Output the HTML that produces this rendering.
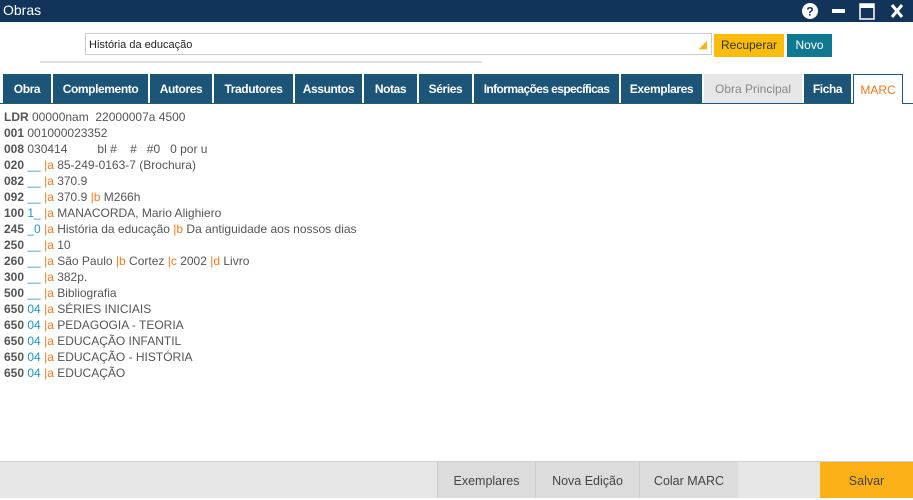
<!DOCTYPE html><html><head><style>
body{margin:0;width:913px;height:497px;position:relative;background:#fff;font-family:"Liberation Sans",sans-serif;overflow:hidden}
.hd{position:absolute;left:0;top:0;width:913px;height:22px;background:#12345a;color:#fff;font-size:14px}
.hd span{position:absolute;left:3px;top:2px}
.inp{position:absolute;left:85px;top:33px;width:627px;height:22px;border:1px solid #ccc;font-size:11px;line-height:22px;padding-left:3px;box-sizing:border-box;color:#222}
.btn{position:absolute;font-size:12px;text-align:center;line-height:23px;height:23px}
.tabs{position:absolute;top:74px;left:0;height:29px;width:913px;border-bottom:1px solid #1d5a7e}
.t{position:absolute;top:0;height:29px;background:#1c5578;color:#fff;font-size:12px;font-weight:bold;letter-spacing:-0.4px;white-space:nowrap;text-align:center;line-height:31px}
.c{position:absolute;left:4px;top:109px;font-size:12px;line-height:16px;color:#555}
.c b{color:#555}.o{color:#f07a20}.bl{color:#2596be}
.ft{position:absolute;left:0;top:461px;width:913px;height:36px;background:#e6e6e6;border-top:1px solid #d0d0d0}
.fb{position:absolute;top:0;height:36px;background:#dcdcdc;color:#444;font-size:12.5px;text-align:center;line-height:38px;border-left:1px solid #ccc}
</style></head><body>
<div class="hd"><span>Obras</span>
<svg style="position:absolute;left:800px;top:2px" width="110" height="18"><circle cx="10" cy="9" r="8" fill="#fff"/><text x="10" y="13.5" font-size="12" font-weight="bold" text-anchor="middle" fill="#12345a" font-family="Liberation Sans">?</text><rect x="32" y="7" width="13" height="4" fill="#fff"/><rect x="60" y="2" width="14" height="15" fill="none" stroke="#fff" stroke-width="1.5"/><rect x="60" y="2" width="14" height="4" fill="#fff"/><path d="M92 3l10 12M102 3l-10 12" stroke="#fff" stroke-width="3"/></svg></div>
<div class="inp">História da educação<span style="position:absolute;right:4px;top:0;color:#f5b21b;font-size:11px">&#9698;</span></div>
<div class="btn" style="left:714px;top:34px;width:70px;background:#fbbc0b;color:#333">Recuperar</div>
<div class="btn" style="left:787px;top:34px;width:45px;background:#10798f;color:#fff">Novo</div>
<div style="position:absolute;left:40px;top:61px;width:442px;height:2px;background:#e0e0e0"></div>
<div class="tabs">
<div class="t" style="left:3px;width:48px">Obra</div>
<div class="t" style="left:53px;width:95px">Complemento</div>
<div class="t" style="left:150px;width:62px">Autores</div>
<div class="t" style="left:214px;width:79px">Tradutores</div>
<div class="t" style="left:295px;width:67px">Assuntos</div>
<div class="t" style="left:364px;width:53px">Notas</div>
<div class="t" style="left:419px;width:53px">Séries</div>
<div class="t" style="left:474px;width:145px;letter-spacing:-0.6px">Informações específicas</div>
<div class="t" style="left:621px;width:81px">Exemplares</div>
<div class="t" style="left:704px;width:98px;background:#e6e6e6;color:#888;font-weight:normal;letter-spacing:0">Obra Principal</div>
<div class="t" style="left:804px;width:47px">Ficha</div>
<div class="t" style="left:853px;width:50px;background:#fff;color:#f07a20;font-weight:normal;letter-spacing:0;border:1px solid #1d5a7e;border-bottom:none;height:30px;box-sizing:border-box;line-height:30px">MARC</div>
</div>
<div class="c">
<b>LDR</b> 00000nam&nbsp; 22000007a 4500<br>
<b>001</b> 001000023352<br>
<b>008</b> 030414 &nbsp; &nbsp; &nbsp; &nbsp; bl # &nbsp; &nbsp;# &nbsp; #0 &nbsp; 0 por u<br>
<b>020</b> <span class="bl">__</span> <span class="o">|a</span> 85-249-0163-7 (Brochura)<br>
<b>082</b> <span class="bl">__</span> <span class="o">|a</span> 370.9<br>
<b>092</b> <span class="bl">__</span> <span class="o">|a</span> 370.9 <span class="o">|b</span> M266h<br>
<b>100</b> <span class="bl">1_</span> <span class="o">|a</span> MANACORDA, Mario Alighiero<br>
<b>245</b> <span class="bl">_0</span> <span class="o">|a</span> História da educação <span class="o">|b</span> Da antiguidade aos nossos dias<br>
<b>250</b> <span class="bl">__</span> <span class="o">|a</span> 10<br>
<b>260</b> <span class="bl">__</span> <span class="o">|a</span> São Paulo <span class="o">|b</span> Cortez <span class="o">|c</span> 2002 <span class="o">|d</span> Livro<br>
<b>300</b> <span class="bl">__</span> <span class="o">|a</span> 382p.<br>
<b>500</b> <span class="bl">__</span> <span class="o">|a</span> Bibliografia<br>
<b>650</b> <span class="bl">04</span> <span class="o">|a</span> SÉRIES INICIAIS<br>
<b>650</b> <span class="bl">04</span> <span class="o">|a</span> PEDAGOGIA - TEORIA<br>
<b>650</b> <span class="bl">04</span> <span class="o">|a</span> EDUCAÇÃO INFANTIL<br>
<b>650</b> <span class="bl">04</span> <span class="o">|a</span> EDUCAÇÃO - HISTÓRIA<br>
<b>650</b> <span class="bl">04</span> <span class="o">|a</span> EDUCAÇÃO
</div>
<div class="ft">
<div class="fb" style="left:437px;width:97px">Exemplares</div>
<div class="fb" style="left:535px;width:103px">Nova Edição</div>
<div class="fb" style="left:639px;width:98px">Colar MARC</div>
<div class="fb" style="left:820px;width:93px;background:#fbb117;border:none;color:#444">Salvar</div>
</div>
</body></html>
